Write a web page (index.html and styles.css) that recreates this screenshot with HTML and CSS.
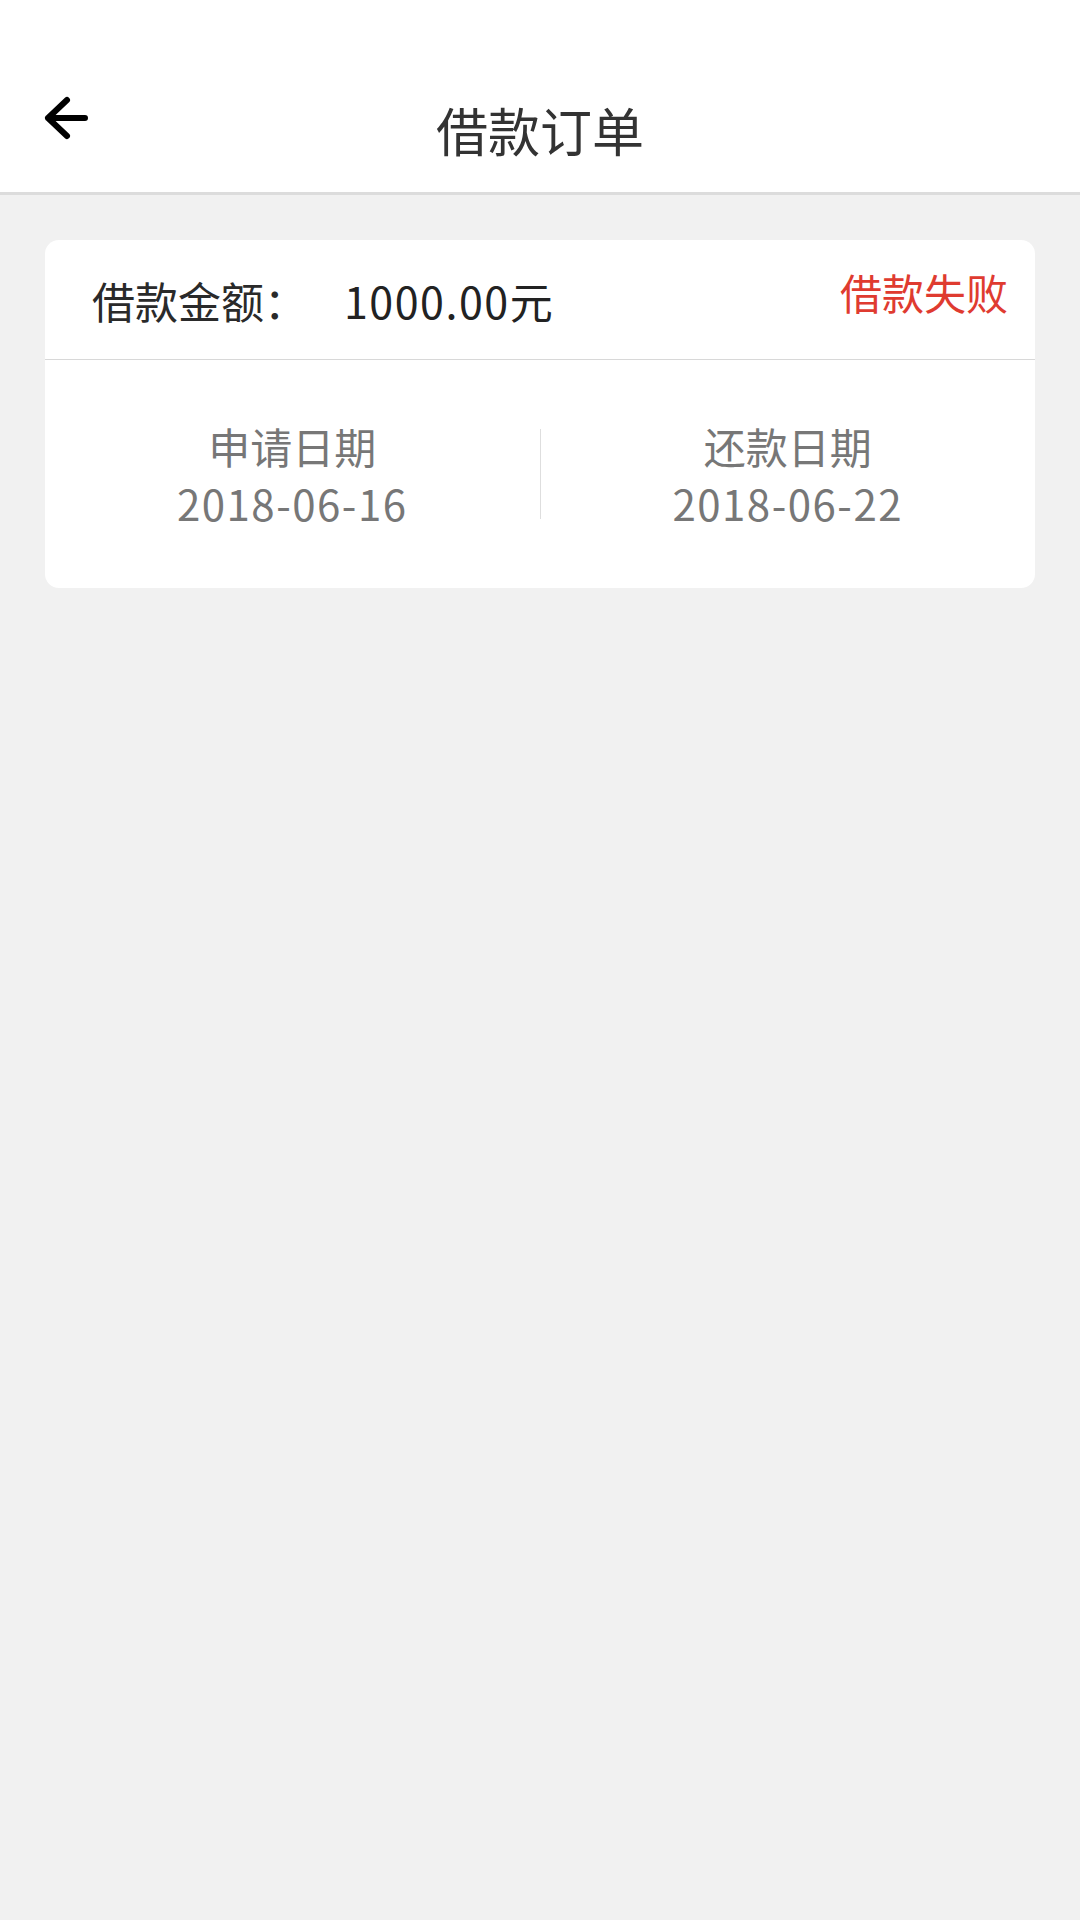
FILE: index.html
```html
<!DOCTYPE html>
<html lang="zh-CN">
<head>
    <meta charset="UTF-8">
    <meta name="viewport" content="width=device-width, initial-scale=1.0">
    <title>借款订单</title>
    <link rel="stylesheet" href="styles.css">
</head>
<body>
    <div class="header">
        <div class="nav">
            <a class="back" href="#">
                <svg width="50" height="50" viewBox="0 0 50 50">
                    <path d="M27 7 L8 25 L27 43 M8 25 H45" fill="none" stroke="#000" stroke-width="6" stroke-linecap="round" stroke-linejoin="round"/>
                </svg>
            </a>
            <div class="title">借款订单</div>
        </div>
    </div>
    <div class="content">
        <div class="order">
            <div class="order-top">
                <div class="amount">
                    <span class="label">借款金额：</span>
                    <span class="value">1000.00元</span>
                </div>
                <div class="status">借款失败</div>
            </div>
            <div class="order-dates">
                <div class="date-item">
                    <div class="date-label">申请日期</div>
                    <div class="date-value">2018-06-16</div>
                </div>
                <div class="split"></div>
                <div class="date-item">
                    <div class="date-label">还款日期</div>
                    <div class="date-value">2018-06-22</div>
                </div>
            </div>
        </div>
    </div>
</body>
</html>
```

FILE: styles.css
```css
body { margin: 0; background-color: #f1f1f1; font-family: "Noto Sans CJK SC", "Noto Sans", sans-serif; height: 1920px; }
.header { background-color: #fff; padding-top: 66px; border-bottom: 3px solid #dcdcdc; }
.nav { position: relative; height: 126px; display: flex; align-items: center; justify-content: center; }
.back { position: absolute; left: 40px; top: 27px; display: block; width: 50px; height: 50px; }
.back svg { display: block; }
.title { font-size: 52px; color: #333; }
.content { padding: 45px 45px 0; }
.order { background-color: #fff; border-radius: 14px; overflow: hidden; }
.order-top { height: 120px; padding: 0 27px 0 47px; display: flex; align-items: center; justify-content: space-between; border-bottom: 1px solid #d8d8d8; box-sizing: border-box; }
.amount { font-size: 43px; color: #222; display: flex; align-items: center; }
.label { color: #2a2a2a; }
.value { margin-left: 37px; letter-spacing: 1.5px; }
.status { font-size: 42px; color: #df3b30; margin-bottom: 16px; }
.order-dates { height: 228px; display: flex; align-items: center; }
.date-item { flex: 1; text-align: center; color: #777; font-size: 42px; line-height: 57px; }
.date-value { letter-spacing: 1.5px; }
.split { width: 1px; height: 90px; background-color: #dedede; }
```
